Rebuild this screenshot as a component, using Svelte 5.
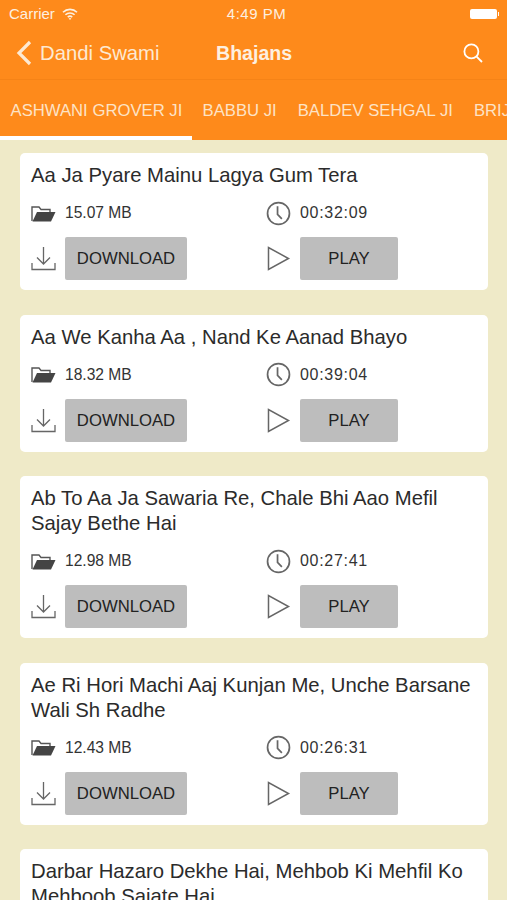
<script lang="ts">
  type Bhajan = { title: string; size: string; time: string };

  const tabs = ["ASHWANI GROVER JI", "BABBU JI", "BALDEV SEHGAL JI", "BRIJ"];

  const bhajans: Bhajan[] = [
    { title: "Aa Ja Pyare Mainu Lagya Gum Tera", size: "15.07 MB", time: "00:32:09" },
    { title: "Aa We Kanha Aa , Nand Ke Aanad Bhayo", size: "18.32 MB", time: "00:39:04" },
    { title: "Ab To Aa Ja Sawaria Re, Chale Bhi Aao Mefil Sajay Bethe Hai", size: "12.98 MB", time: "00:27:41" },
    { title: "Ae Ri Hori Machi Aaj Kunjan Me, Unche Barsane Wali Sh Radhe", size: "12.43 MB", time: "00:26:31" },
    { title: "Darbar Hazaro Dekhe Hai, Mehbob Ki Mehfil Ko Mehboob Sajate Hai", size: "14.20 MB", time: "00:30:12" },
  ];
</script>

<div class="screen">
  <header class="top">
    <div class="status">
      <span class="carrier">Carrier</span>
      <svg class="wifi" viewBox="0 0 16 12" fill="none" stroke="currentColor" stroke-width="1.6">
        <path d="M1 4.2a10 10 0 0 1 14 0" />
        <path d="M3.4 6.8a6.6 6.6 0 0 1 9.2 0" />
        <path d="M5.8 9.2a3.2 3.2 0 0 1 4.4 0" />
        <path d="M8 12l-1.3-1.5a2 2 0 0 1 2.6 0z" fill="currentColor" stroke="none" />
      </svg>
      <span class="clock">4:49 PM</span>
      <span class="battery"><i></i></span>
    </div>

    <nav class="bar">
      <span class="back">
        <svg viewBox="0 0 16 26" fill="none" stroke="currentColor" stroke-width="3.2">
          <path d="M14 2L3 13l11 11" />
        </svg>
        Dandi Swami
      </span>
      <span class="heading">Bhajans</span>
      <svg class="search" viewBox="0 0 20 20" fill="none" stroke="currentColor" stroke-width="1.8">
        <circle cx="8.4" cy="8.4" r="7" />
        <path d="M13.4 13.4l5.6 5.6" />
      </svg>
    </nav>

    <div class="tabs">
      {#each tabs as tab, i}
        <span class="tab" class:active={i === 0}>{tab}</span>
      {/each}
    </div>
  </header>

  <main class="list">
    {#each bhajans as b}
      <article class="card">
        <h2>{b.title}</h2>
        <div class="grid">
          <div class="cell">
            <svg class="ico" viewBox="0 0 25 18">
              <path d="M1 16.5V2.5h7l2 2.5h9v2.5" fill="none" stroke="#555" stroke-width="1.4" />
              <path d="M1.5 17L6 7.5h18.5L20 17z" fill="#444" />
            </svg>
            <span>{b.size}</span>
          </div>
          <div class="cell">
            <svg class="ico" viewBox="0 0 26 26" fill="none" stroke="#666" stroke-width="1.8">
              <circle cx="13" cy="13" r="11.4" />
              <path d="M12 5.5V14l4.5 4.5" />
            </svg>
            <span class="time">{b.time}</span>
          </div>
          <div class="cell">
            <svg class="ico" viewBox="0 0 25 25" fill="none" stroke="#666" stroke-width="1.3">
              <path d="M12.5 1v16M6 11.5l6.5 6.5 6.5-6.5" />
              <path d="M1 17v6.5h23V17" />
            </svg>
            <button type="button" class="btn wide">DOWNLOAD</button>
          </div>
          <div class="cell">
            <svg class="ico" viewBox="0 0 25 25" fill="none" stroke="#666" stroke-width="1.5">
              <path d="M2.5 1.5v22l20-11z" />
            </svg>
            <button type="button" class="btn">PLAY</button>
          </div>
        </div>
      </article>
    {/each}
  </main>
</div>

<style>
  :global(body) {
    margin: 0;
    background: #efeac8;
  }

  .screen {
    width: 507px;
    height: 900px;
    overflow: hidden;
    background: #efeac8;
    font-family: "Liberation Sans", Arial, sans-serif;
  }

  .top {
    background: #fe8a1b;
    color: #fff;
  }

  .status {
    position: relative;
    display: flex;
    align-items: center;
    height: 27px;
    padding: 0 9px;
    font-size: 15px;
    color: #fdf0e0;
  }

  .wifi {
    width: 16px;
    height: 12px;
    margin-left: 7px;
  }

  .clock {
    position: absolute;
    left: 6px;
    right: 0;
    text-align: center;
    font-weight: 500;
    letter-spacing: 0.5px;
  }

  .battery {
    position: relative;
    width: 27px;
    height: 10px;
    margin-left: auto;
    margin-right: 1px;
    background: #fff;
    border-radius: 2px;
  }

  .battery i {
    position: absolute;
    right: -2px;
    top: 3px;
    width: 1px;
    height: 4px;
    background: #fff;
  }

  .bar {
    display: flex;
    align-items: center;
    height: 52px;
    padding: 0 24px 0 16px;
    border-bottom: 1px solid #f58317;
  }

  .back {
    display: flex;
    align-items: center;
    gap: 8px;
    width: 200px;
    font-size: 20.3px;
    color: #fde9d2;
  }

  .back svg {
    width: 16px;
    height: 26px;
  }

  .heading {
    font-size: 19.6px;
    font-weight: 700;
    color: #fdf0e0;
  }

  .search {
    width: 20px;
    height: 20px;
    margin-left: auto;
  }

  .tabs {
    display: flex;
    height: 60px;
    overflow: hidden;
    white-space: nowrap;
  }

  .tab {
    display: flex;
    align-items: center;
    padding: 5px 10.5px 0;
    font-size: 16.7px;
    color: #fde3c6;
    border-bottom: 4px solid transparent;
  }

  .tab.active {
    flex: none;
    box-sizing: border-box;
    width: 192px;
    border-bottom-color: #fff;
  }

  .list {
    display: flex;
    flex-direction: column;
    gap: 24.5px;
    padding: 13px 19px 0 20px;
  }

  .card {
    padding: 10px 10px 10px 11px;
    background: #fff;
    border-radius: 5px;
  }

  h2 {
    margin: 0 0 11px;
    font-size: 20.3px;
    font-weight: 400;
    line-height: 25px;
    color: #2b2b2b;
  }

  .grid {
    display: grid;
    grid-template-columns: 235px 1fr;
    row-gap: 10px;
  }

  .cell {
    display: flex;
    align-items: center;
    gap: 9px;
    min-height: 28px;
    font-size: 15.6px;
    color: #333;
  }

  .time {
    font-size: 16px;
    letter-spacing: 0.7px;
  }

  .ico {
    width: 25px;
    height: 25px;
    flex: none;
  }

  .btn {
    width: 98px;
    height: 43px;
    padding: 1px 0 0;
    border: none;
    border-radius: 2px;
    background: #bdbdbd;
    font: inherit;
    font-size: 16.7px;
    color: #222;
  }

  .btn.wide {
    width: 122px;
  }
</style>
